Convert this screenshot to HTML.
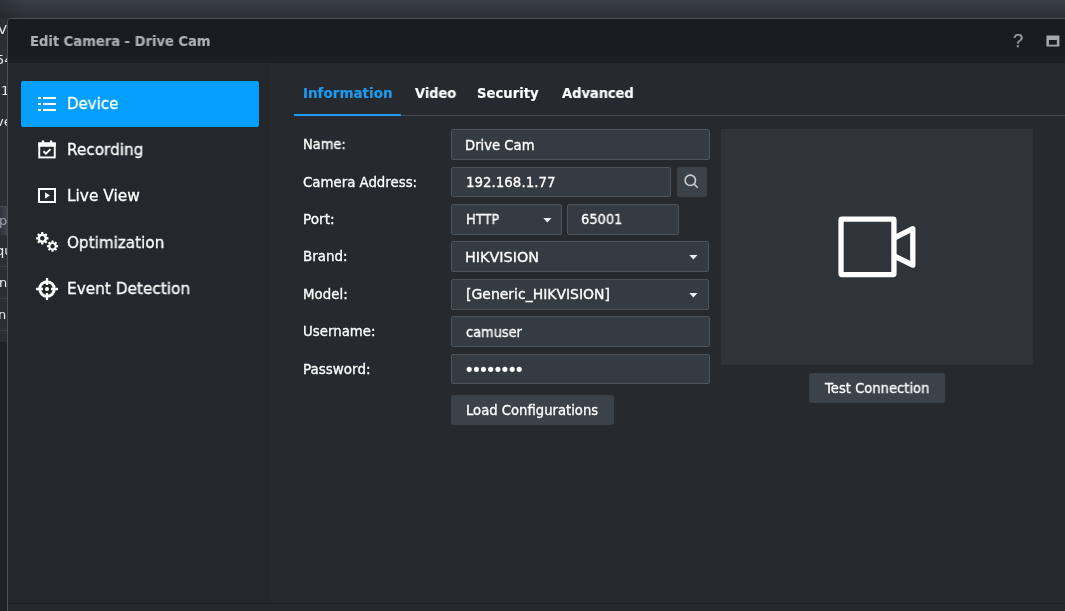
<!DOCTYPE html>
<html lang="en">
<head>
<meta charset="utf-8">
<title>Edit Camera - Drive Cam</title>
<style>
*{box-sizing:border-box;margin:0;padding:0}
html,body{width:1065px;height:611px;overflow:hidden}
body{position:relative;background:#2a2e35;font-family:"DejaVu Sans","Liberation Sans",sans-serif;color:#fff;font-size:13px}
.a{position:absolute}
.t{position:absolute;white-space:nowrap;transform-origin:0 50%;will-change:transform}
.topgrad{left:0;top:0;width:1065px;height:18px;background:linear-gradient(90deg,rgba(20,22,26,.28),rgba(20,22,26,0) 26px),linear-gradient(#383e47,#2c3037)}
.strip{left:0;top:0;width:7px;height:611px;overflow:hidden}
.strip .t{font-size:13px;line-height:13px;color:#eceef0}
.dlg{left:7px;top:18px;width:1100px;height:640px;border:1px solid #4d5258;border-radius:4px;background:#25282d}
.tbar{left:8px;top:19px;width:1057px;height:44px;background:linear-gradient(#181b20 0,#181b20 37px,#1b1e23 38px,#1b1e23 44px);border-top-left-radius:3px}
.side{left:8px;top:63px;width:262px;height:540px;background:#24272c}
.main{left:270px;top:63px;width:795px;height:540px;background:#26292e}
.footln{left:8px;top:603px;width:1057px;height:1px;background:#1b1d21}
.foot{left:8px;top:604px;width:1057px;height:7px;background:#25282d}
.act{left:21px;top:81px;width:238px;height:46px;border-radius:2px;background:#049ffe}
.tabln{left:294px;top:115px;width:771px;height:1px;background:#42464d}
.tabact{left:294px;top:114px;width:107px;height:2px;background:#1d9bf0}
.inp{background:#353b43;border:1px solid #4d535b;border-radius:2px}
.btn{background:#3c424a;border-radius:3px}
.prev{left:721px;top:129px;width:312px;height:236px;background:#2f343b}
svg{position:absolute;overflow:visible}
</style>
</head>
<body>
<div class="a topgrad"></div>
<div class="a strip">
  <div class="a" style="left:0;top:206px;width:7px;height:29px;background:linear-gradient(90deg,#31363d,#40464f);border-top:1px solid #4a5058"></div>
  <div class="a" style="left:0;top:266px;width:7px;height:1px;background:#3a3f46"></div>
  <div class="a" style="left:0;top:298px;width:7px;height:1px;background:#3a3f46"></div>
  <div class="a" style="left:0;top:330px;width:7px;height:1px;background:#3a3f46"></div>
  <div class="a" style="left:0;top:342px;width:7px;height:269px;background:#1e2125"></div>
  <div class="t" style="left:-2px;top:22.5px">V</div>
  <div class="t" style="left:-4px;top:53px">54</div>
  <div class="t" style="left:1px;top:84px">1</div>
  <div class="t" style="left:-4.5px;top:115px">ve</div>
  <div class="t" style="left:-1px;top:214px;color:#9da1a7">p</div>
  <div class="t" style="left:-4px;top:244px">qu</div>
  <div class="t" style="left:-1.5px;top:276px">n</div>
  <div class="t" style="left:-2.5px;top:308px">ne</div>
</div>
<div class="a dlg"></div>
<div class="a tbar"></div>
<div class="a side"></div>
<div class="a main"></div>
<div class="a footln"></div>
<div class="a foot"></div>

<!-- title bar icons -->
<div class="t" style="left:1013.2px;top:31.4px;font-family:'Liberation Sans',sans-serif;font-size:18.5px;line-height:19px;color:#9b9ea3;-webkit-text-stroke:.25px #9b9ea3">?</div>
<svg style="left:1046px;top:35px" width="14" height="12" viewBox="0 0 14 12" fill="#a5a8ad" fill-rule="evenodd"><path d="M0.9 0.6h12a.5 .5 0 0 1 .5 .5v10a.5 .5 0 0 1-.5 .5H0.9a.5 .5 0 0 1-.5-.5V1.1a.5 .5 0 0 1 .5-.5zM2.95 5v4.8h7.9V5z"/></svg>

<!-- sidebar -->
<div class="a act"></div>
<svg style="left:38px;top:97px" width="18" height="14" viewBox="0 0 18 14" fill="#fff"><rect x="0" y="0" width="3" height="2"/><rect x="5" y="0" width="13" height="2"/><rect x="0" y="6" width="3" height="2"/><rect x="5" y="6" width="13" height="2"/><rect x="0" y="12" width="3" height="2"/><rect x="5" y="12" width="13" height="2"/></svg>
<svg style="left:38px;top:140.2px" width="18" height="18.4" viewBox="0 0 18 19" fill="none" stroke="#fff" stroke-width="2"><rect x="1" y="3.6" width="16" height="14.4"/><rect x="1" y="3.6" width="16" height="2.4" fill="#fff"/><path d="M4.8 0.6v3M13.2 0.6v3" stroke-width="2.4"/><path d="M5.4 11.6l2.5 2.5 4.7-4.7" stroke-width="2"/></svg>
<svg style="left:38px;top:188.3px" width="18" height="15" viewBox="0 0 18 15" fill="none" stroke="#fff" stroke-width="2"><rect x="1" y="1" width="16" height="13"/><path d="M7 4.2v6.6l5-3.3z" fill="#fff" stroke="none"/></svg>
<svg style="left:35.8px;top:232.1px" width="23" height="20" viewBox="0 0 23 20" fill="#fff" fill-rule="evenodd"><path d="M5.10 1.76 L5.22 0.09 L7.38 0.09 L7.50 1.76 L8.66 2.24 L9.92 1.15 L11.45 2.68 L10.36 3.94 L10.84 5.10 L12.51 5.22 L12.51 7.38 L10.84 7.50 L10.36 8.66 L11.45 9.92 L9.92 11.45 L8.66 10.36 L7.50 10.84 L7.38 12.51 L5.22 12.51 L5.10 10.84 L3.94 10.36 L2.68 11.45 L1.15 9.92 L2.24 8.66 L1.76 7.50 L0.09 7.38 L0.09 5.22 L1.76 5.10 L2.24 3.94 L1.15 2.68 L2.68 1.15 L3.94 2.24Z M4.00 6.30 a2.30 2.30 0 1 0 4.60 0 a2.30 2.30 0 1 0 -4.60 0Z"/><path d="M15.42 10.14 L15.52 8.58 L17.48 8.58 L17.58 10.14 L18.61 10.57 L19.78 9.54 L21.16 10.92 L20.13 12.09 L20.56 13.12 L22.12 13.22 L22.12 15.18 L20.56 15.28 L20.13 16.31 L21.16 17.48 L19.78 18.86 L18.61 17.83 L17.58 18.26 L17.48 19.82 L15.52 19.82 L15.42 18.26 L14.39 17.83 L13.22 18.86 L11.84 17.48 L12.87 16.31 L12.44 15.28 L10.88 15.18 L10.88 13.22 L12.44 13.12 L12.87 12.09 L11.84 10.92 L13.22 9.54 L14.39 10.57Z M14.30 14.20 a2.20 2.20 0 1 0 4.40 0 a2.20 2.20 0 1 0 -4.40 0Z"/></svg>
<svg style="left:35.9px;top:278px" width="22" height="22" viewBox="0 0 22 22" fill="none" stroke="#fff" stroke-width="2.9"><circle cx="11" cy="11" r="7.3"/><circle cx="11" cy="11" r="2" fill="#fff" stroke="none"/><path d="M11 0v7M11 15v7M0 11h7M15 11h7" stroke-width="2.3"/></svg>

<!-- tabs -->
<div class="a tabln"></div>
<div class="a tabact"></div>

<!-- form -->
<div class="a inp" style="left:451px;top:129px;width:259px;height:31px"></div>
<div class="a inp" style="left:451px;top:167px;width:220px;height:30px"></div>
<div class="a btn" style="left:677px;top:167px;width:30px;height:30px"></div>
<svg style="left:677px;top:167px" width="30" height="30" viewBox="0 0 30 30" fill="none" stroke="#cbced2" stroke-width="1.6" stroke-linecap="round"><circle cx="13.3" cy="13.3" r="5.2"/><path d="M17.2 17.2l3.1 3"/></svg>
<div class="a inp" style="left:451px;top:204px;width:111px;height:31px"></div>
<div class="a inp" style="left:567px;top:204px;width:112px;height:31px"></div>
<div class="a inp" style="left:451px;top:241px;width:258px;height:31px"></div>
<div class="a inp" style="left:451px;top:279px;width:258px;height:31px"></div>
<div class="a inp" style="left:451px;top:316px;width:259px;height:31px"></div>
<div class="a inp" style="left:451px;top:354px;width:259px;height:30px"></div>
<div class="a btn" style="left:451px;top:395px;width:163px;height:30px"></div>
<svg style="left:543px;top:218px" width="9" height="5" viewBox="0 0 9 5" fill="#eceef0"><path d="M0.3 0h8.2l-4.1 4.6z"/></svg>
<svg style="left:689.3px;top:255px" width="9" height="5" viewBox="0 0 9 5" fill="#eceef0"><path d="M0.3 0h8.2l-4.1 4.6z"/></svg>
<svg style="left:689.3px;top:293px" width="9" height="5" viewBox="0 0 9 5" fill="#eceef0"><path d="M0.3 0h8.2l-4.1 4.6z"/></svg>
<div class="t" id="dots" style="left:463.9px;top:360px;font-size:17.6px;line-height:20px;letter-spacing:-3.22px">••••••••</div>

<div class="a prev"></div>
<svg style="left:721px;top:129px" width="312" height="236" viewBox="0 0 312 236" fill="none" stroke="#fff" stroke-width="5.3" stroke-linejoin="round"><rect x="120.05" y="90.15" width="52.9" height="55.5" rx="0.8"/><path d="M172.95 109.1L191.8 99.7V136.2L172.95 126.8"/></svg>
<div class="a btn" style="left:809px;top:373px;width:136px;height:30px"></div>

<div class="t" id="ttl" style="left:30px;top:35px;font-size:13.2px;line-height:13.2px;color:#acafb3;font-weight:bold;-webkit-text-stroke:.15px;transform:scaleX(0.9942);">Edit Camera - Drive Cam</div>
<div class="t" id="s1" style="left:67px;top:97px;font-size:15.4px;line-height:15.4px;color:#ffffff;-webkit-text-stroke:.3px;transform:scaleX(0.9737);">Device</div>
<div class="t" id="s2" style="left:67px;top:143px;font-size:15.4px;line-height:15.4px;color:#ffffff;-webkit-text-stroke:.3px;transform:scaleX(0.9916);">Recording</div>
<div class="t" id="s3" style="left:67px;top:189px;font-size:15.4px;line-height:15.4px;color:#ffffff;-webkit-text-stroke:.3px;transform:scaleX(0.9935);">Live View</div>
<div class="t" id="s4" style="left:67px;top:236px;font-size:15.4px;line-height:15.4px;color:#ffffff;-webkit-text-stroke:.3px;transform:scaleX(0.9879);">Optimization</div>
<div class="t" id="s5" style="left:67px;top:282px;font-size:15.4px;line-height:15.4px;color:#ffffff;-webkit-text-stroke:.3px;transform:scaleX(0.9955);">Event Detection</div>
<div class="t" id="t1" style="left:303px;top:87px;font-size:13.2px;line-height:13.2px;color:#1d9bf0;font-weight:bold;-webkit-text-stroke:.15px;transform:scaleX(1.0227);">Information</div>
<div class="t" id="t2" style="left:415px;top:87px;font-size:13.2px;line-height:13.2px;color:#ffffff;font-weight:bold;-webkit-text-stroke:.15px;transform:scaleX(0.9798);">Video</div>
<div class="t" id="t3" style="left:477px;top:87px;font-size:13.2px;line-height:13.2px;color:#ffffff;font-weight:bold;-webkit-text-stroke:.15px;transform:scaleX(0.9999);">Security</div>
<div class="t" id="t4" style="left:562px;top:87px;font-size:13.2px;line-height:13.2px;color:#ffffff;font-weight:bold;-webkit-text-stroke:.15px;transform:scaleX(0.9870);">Advanced</div>
<div class="t" id="l1" style="left:303px;top:138px;font-size:13.2px;line-height:13.2px;color:#ffffff;-webkit-text-stroke:.3px;transform:scaleX(0.9863);">Name:</div>
<div class="t" id="l2" style="left:303px;top:176px;font-size:13.2px;line-height:13.2px;color:#ffffff;-webkit-text-stroke:.3px;transform:scaleX(1.0105);">Camera Address:</div>
<div class="t" id="l3" style="left:303px;top:213px;font-size:13.2px;line-height:13.2px;color:#ffffff;-webkit-text-stroke:.3px;transform:scaleX(1.0364);">Port:</div>
<div class="t" id="l4" style="left:303px;top:250px;font-size:13.2px;line-height:13.2px;color:#ffffff;-webkit-text-stroke:.3px;transform:scaleX(1.0195);">Brand:</div>
<div class="t" id="l5" style="left:303px;top:288px;font-size:13.2px;line-height:13.2px;color:#ffffff;-webkit-text-stroke:.3px;transform:scaleX(1.0137);">Model:</div>
<div class="t" id="l6" style="left:303px;top:325px;font-size:13.2px;line-height:13.2px;color:#ffffff;-webkit-text-stroke:.3px;transform:scaleX(1.0118);">Username:</div>
<div class="t" id="l7" style="left:303px;top:363px;font-size:13.2px;line-height:13.2px;color:#ffffff;-webkit-text-stroke:.3px;transform:scaleX(1.0224);">Password:</div>
<div class="t" id="i1" style="left:465px;top:139px;font-size:13.2px;line-height:13.2px;color:#ffffff;-webkit-text-stroke:.3px;transform:scaleX(0.9941);">Drive Cam</div>
<div class="t" id="i2" style="left:466px;top:176px;font-size:13.2px;line-height:13.2px;color:#ffffff;-webkit-text-stroke:.3px;transform:scaleX(1.0155);">192.168.1.77</div>
<div class="t" id="i3" style="left:466px;top:213px;font-size:13.2px;line-height:13.2px;color:#ffffff;-webkit-text-stroke:.3px;transform:scaleX(0.9843);">HTTP</div>
<div class="t" id="i4" style="left:581px;top:213px;font-size:13.2px;line-height:13.2px;color:#ffffff;-webkit-text-stroke:.3px;transform:scaleX(0.9854);">65001</div>
<div class="t" id="i5" style="left:465px;top:251px;font-size:13.2px;line-height:13.2px;color:#ffffff;-webkit-text-stroke:.3px;transform:scaleX(1.0921);">HIKVISION</div>
<div class="t" id="i6" style="left:466px;top:288px;font-size:13.2px;line-height:13.2px;color:#ffffff;-webkit-text-stroke:.3px;transform:scaleX(1.0597);">[Generic_HIKVISION]</div>
<div class="t" id="i7" style="left:466px;top:326px;font-size:13.2px;line-height:13.2px;color:#ffffff;-webkit-text-stroke:.3px;transform:scaleX(0.9814);">camuser</div>
<div class="t" id="b1" style="left:466px;top:404px;font-size:13.2px;line-height:13.2px;color:#ffffff;-webkit-text-stroke:.3px;transform:scaleX(0.9965);">Load Configurations</div>
<div class="t" id="b2" style="left:825px;top:382px;font-size:13.2px;line-height:13.2px;color:#ffffff;-webkit-text-stroke:.3px;transform:scaleX(0.9960);">Test Connection</div>
</body>
</html>
